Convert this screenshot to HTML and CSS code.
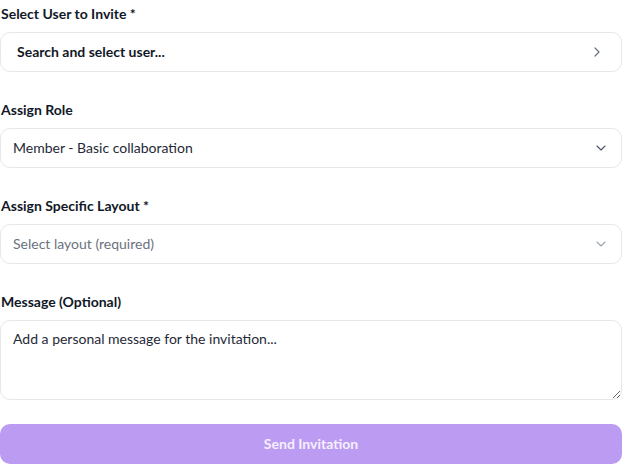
FILE: index.html
```html
<!DOCTYPE html>
<html>
<head>
<meta charset="utf-8">
<link rel="stylesheet" href="styles.css">
</head>
<body>
<form class="form">
  <div class="field">
    <label class="label">Select User to Invite *</label>
    <div class="box box-user">
      <span class="user-text">Search and select user...</span>
      <svg class="icon" width="16" height="16" viewBox="0 0 24 24" fill="none" stroke="#6b7280" stroke-width="1.8" stroke-linecap="round" stroke-linejoin="round"><path d="M9 18l6-6-6-6"/></svg>
    </div>
  </div>
  <div class="field">
    <label class="label">Assign Role</label>
    <div class="box">
      <span class="value">Member - Basic collaboration</span>
      <svg class="icon" width="16" height="16" viewBox="0 0 24 24" fill="none" stroke="#4b5563" stroke-width="1.6" stroke-linecap="round" stroke-linejoin="round"><path d="M6 9l6 6 6-6"/></svg>
    </div>
  </div>
  <div class="field">
    <label class="label">Assign Specific Layout *</label>
    <div class="box">
      <span class="placeholder">Select layout (required)</span>
      <svg class="icon" width="16" height="16" viewBox="0 0 24 24" fill="none" stroke="#9ca3af" stroke-width="1.6" stroke-linecap="round" stroke-linejoin="round"><path d="M6 9l6 6 6-6"/></svg>
    </div>
  </div>
  <div class="field">
    <label class="label">Message (Optional)</label>
    <textarea class="textarea" placeholder="Add a personal message for the invitation..."></textarea>
  </div>
  <button type="button" class="button">Send Invitation</button>
</form>
</body>
</html>
```
FILE: styles.css
```css
html, body {
  margin: 0;
  padding: 0;
  background: #ffffff;
}
body {
  font-family: "Lato", "Noto Sans", sans-serif;
  font-size: 14px;
  line-height: 20px;
  color: #111827;
}
.form {
  display: flex;
  flex-direction: column;
  gap: 28px;
  padding: 4px 0 0 0;
  width: 622px;
}
.field {
  display: flex;
  flex-direction: column;
  gap: 8px;
}
.label {
  font-weight: 700;
  padding-left: 1px;
  color: #111827;
}
.box {
  box-sizing: border-box;
  height: 40px;
  border: 1px solid #e5e7eb;
  border-radius: 10px;
  display: flex;
  align-items: center;
  justify-content: space-between;
  padding: 0 12px 0 12px;
  background: #fff;
}
.box-user {
  padding-left: 16px;
  padding-right: 16px;
}
.user-text {
  font-weight: 700;
}
.value {
  color: #1f2937;
}
.placeholder {
  color: #6b7280;
}
.icon {
  flex: none;
}
.textarea {
  box-sizing: border-box;
  height: 80px;
  width: 100%;
  border: 1px solid #e5e7eb;
  border-radius: 10px;
  padding: 8px 12px;
  font: inherit;
  color: #1f2937;
  resize: vertical;
  outline: none;
}
.textarea::placeholder {
  color: #1f2937;
  opacity: 1;
}
.button {
  margin-top: -4px;
  height: 40px;
  border: none;
  border-radius: 10px;
  background: #bc9cf2;
  color: #f5efff;
  font: inherit;
  font-weight: 700;
  width: 100%;
}
```
